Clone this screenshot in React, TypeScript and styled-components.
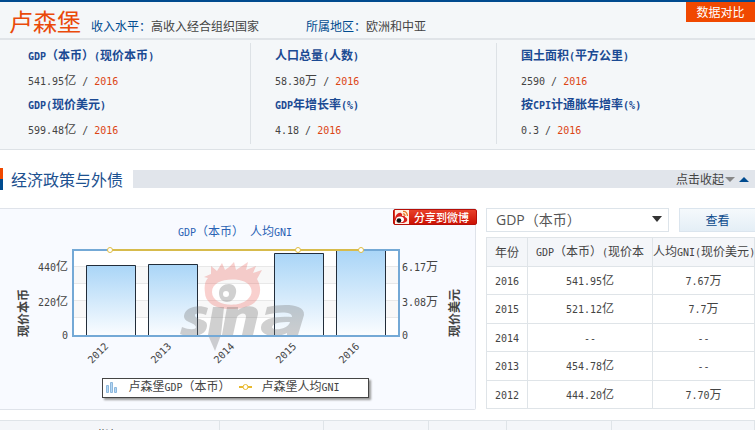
import React from 'react';
import styled, { createGlobalStyle } from 'styled-components';

const cjk = '"Noto Sans CJK SC", "Liberation Sans", sans-serif';
const mono = '"DejaVu Sans Mono", "Liberation Mono", monospace';

const GlobalStyle = createGlobalStyle`
  *, *::before, *::after { box-sizing: border-box; }
  html { scrollbar-width: none; }
  body {
    margin: 0;
    background: #fff;
    color: #444;
    font-family: ${cjk};
    font-size: 12px;
    line-height: 18px;
  }
  h1, h2, h3, p, dl, dt, dd { margin: 0; font-weight: normal; }
  button, select { font: inherit; margin: 0; }
`;

const Latin = styled.span`
  font-family: ${mono};
  font-size: 10px;
  white-space: pre;
`;

const split = (text: string) => text.split(/([\x20-\x7e]+)/).filter(Boolean);
const isLatin = (part: string) => /^[\x20-\x7e]/.test(part);

function Mixed({ children }: { children: string }) {
  return (
    <>
      {split(children).map((part, i) =>
        isLatin(part) ? <Latin key={i}>{part}</Latin> : <React.Fragment key={i}>{part}</React.Fragment>
      )}
    </>
  );
}

const Summary = styled.section`
  background: #f4f7f9;
  border-top: 2px solid #004b8f;
  border-bottom: 1px solid #dde2e6;
`;

const SummaryHead = styled.header`
  display: flex;
  align-items: flex-start;
  height: 38px;
  padding-left: 9px;
  border-bottom: 2px solid #e0e4e8;
`;

const Country = styled.h1`
  color: #ea4a0a;
  font-size: 24px;
  line-height: 38px;
`;

const Fact = styled.p<{ $gap: number }>`
  margin-left: ${(p) => p.$gap}px;
  padding-top: 15px;
  color: #444;
`;

const FactName = styled.span`
  color: #004b8f;
`;

const Compare = styled.button`
  width: 69px;
  height: 20px;
  margin-left: auto;
  padding: 0;
  border: 0;
  background: #f04800;
  color: #fff;
  line-height: 20px;
`;

const Stats = styled.div`
  display: grid;
  grid-template-columns: 251fr 246fr 258fr;
  padding: 3px 0 5px;
`;

const StatColumn = styled.dl`
  padding: 0 0 3px 28px;
  border-right: 1px solid #dde2e6;

  & + & { padding-left: 24px; }
  &:last-child { border-right: 0; }
`;

const StatName = styled.dt`
  height: 24px;
  color: #1b4a93;
  font-weight: bold;
  line-height: 24px;
  white-space: nowrap;
`;

const StatValue = styled.dd`
  height: 25px;
  line-height: 25px;
`;

const Year = styled.span`
  color: #dc4514;
`;

const SectionHead = styled.header`
  display: flex;
  align-items: center;
  margin: 17px 0 17px;
  height: 24px;
`;

const Marker = styled.span`
  width: 3px;
  height: 22px;
  background: linear-gradient(#f04800 50%, #004b8f 50%);
`;

const SectionTitle = styled.h2`
  margin: 0 10px 0 8px;
  color: #1d5190;
  font-size: 16px;
  line-height: 24px;
`;

const SectionBar = styled.div`
  display: flex;
  flex: 1;
  align-items: center;
  justify-content: flex-end;
  height: 18px;
  padding-right: 5px;
  background: #e1e5eb;
`;

const Collapse = styled.button`
  display: flex;
  align-items: center;
  padding: 0;
  border: 0;
  background: none;
  color: #444;
  line-height: 18px;
`;

const Content = styled.div`
  display: grid;
  grid-template-columns: minmax(0, 476fr) minmax(0, 269fr);
  gap: 10px;
`;

const ChartPanel = styled.section`
  position: relative;
  display: flex;
  flex-direction: column;
  align-items: center;
  padding-bottom: 11px;
  border: 1px solid #dfe3ea;
  border-left: 0;
  border-radius: 0 2px 2px 0;
  background: #f8faff;
`;

const ChartSvg = styled.svg`
  display: block;
  width: 100%;
  height: auto;
`;

const Share = styled.button`
  position: absolute;
  top: 0;
  right: -2px;
  display: flex;
  align-items: center;
  height: 16px;
  padding: 0 7px 0 1px;
  gap: 5px;
  border: 1px solid #b50f08;
  border-radius: 2px;
  background: linear-gradient(#e8402a, #cc1204);
  color: #fff;
  font-size: 11px;
  font-weight: 500;
  line-height: 14px;
`;

const Legend = styled.div`
  display: flex;
  align-items: center;
  height: 20px;
  margin-left: -4px;
  padding: 0 28px 2px 3px;
  border: 1px solid #444;
  background: #fff;
  box-shadow: 2px 2px 2px #999;
  white-space: nowrap;
`;

const LegendText = styled.span`
  margin: 0 8px 0 10px;
  &:last-child { margin-right: 0; }
`;

const Side = styled.section`
  display: flex;
  flex-direction: column;
  gap: 5px;
`;

const Query = styled.form`
  display: flex;
  gap: 10px;
`;

const SelectWrap = styled.label`
  position: relative;
  flex: 1;
`;

const Select = styled.select`
  display: block;
  width: 100%;
  height: 24px;
  padding: 0 24px 0 9px;
  border: 1px solid #dde4ea;
  border-radius: 0;
  background: #fff;
  color: #555;
  appearance: none;
  font-family: "Open Sans", ${cjk};
  font-size: 14px;
`;

const Caret = styled.svg`
  position: absolute;
  top: 8px;
  right: 7px;
  pointer-events: none;
`;

const View = styled.button`
  width: 76px;
  height: 24px;
  padding: 0;
  border: 1px solid #dbe5ee;
  border-right: 0;
  background: linear-gradient(#f5f9fc, #e4eef6);
  color: #0a4a8c;
`;

const DataTable = styled.table`
  width: 100%;
  border-collapse: collapse;
  table-layout: fixed;
`;

const cell = `
  padding: 0;
  border: 1px solid #dfe4e8;
  text-align: center;
  white-space: nowrap;
  overflow: hidden;
`;

const HeadCell = styled.th<{ $width?: number }>`
  ${cell}
  ${(p) => (p.$width ? `width: ${p.$width}px;` : '')}
  height: 29px;
  background: #f4f6f9;
  font-weight: normal;
`;

const Row = styled.tr`
  height: 28px;

  &:nth-child(even) { height: 29px; }
`;

const Cell = styled.td`
  ${cell}
`;

const NextTable = styled.table`
  width: 100%;
  margin-top: 10px;
  border-collapse: collapse;
  table-layout: fixed;
`;

const NextHead = styled(HeadCell)`
  border-left: 0;
`;

const columns = [
  [
    ['GDP（本币）(现价本币)', '541.95亿 / '],
    ['GDP(现价美元)', '599.48亿 / '],
  ],
  [
    ['人口总量(人数)', '58.30万 / '],
    ['GDP年增长率(%)', '4.18 / '],
  ],
  [
    ['国土面积(平方公里)', '2590 / '],
    ['按CPI计通胀年增率(%)', '0.3 / '],
  ],
];

const rows = [
  ['2016', '541.95亿', '7.67万'],
  ['2015', '521.12亿', '7.7万'],
  ['2014', '--', '--'],
  ['2013', '454.78亿', '--'],
  ['2012', '444.20亿', '7.70万'],
];

const bars = [
  { x: 86, top: 56 },
  { x: 148, top: 55 },
  { x: 274, top: 44 },
  { x: 336, top: 41 },
];

const years = [
  { label: '2012', x: 109 },
  { label: '2013', x: 172 },
  { label: '2014', x: 235 },
  { label: '2015', x: 297 },
  { label: '2016', x: 360 },
];

type LabelProps = {
  x: number;
  y: number;
  children: string;
  anchor?: 'start' | 'middle' | 'end';
  fill?: string;
  bold?: boolean;
  transform?: string;
};

function Label({ x, y, children, anchor = 'start', fill = '#444', bold, transform }: LabelProps) {
  return (
    <text x={x} y={y} textAnchor={anchor} fill={fill} fontSize={12} fontWeight={bold ? 700 : 400} transform={transform}>
      {split(children).map((part, i) => (
        <tspan key={i} fontFamily={isLatin(part) ? mono : cjk} fontSize={isLatin(part) ? 10 : 12}>
          {part}
        </tspan>
      ))}
    </text>
  );
}

function Watermark() {
  return (
    <g>
      <path
        fill="#e8443c"
        fillRule="evenodd"
        opacity={0.25}
        d="M205 84C204 77 205 72 208 69L204 68L211 65L211 57L217 62L222 54L225 61Q230 58 234 53L236 61L248 53L246 61L256 57L253 64L262 61L257 70C262 79 261 88 254 94C243 102 219 102 210 94C207 91 205 88 205 84ZM212 83C212 97 238 99 247 91C256 83 251 73 239 71C225 69 212 73 212 83Z"
      />
      <g fill="#777" opacity={0.34}>
        <path fillRule="evenodd" d="M219 84C219 78 224 75 229 75C234 75 237 79 236 84C235 90 231 93 227 93C222 93 219 89 219 84ZM223 85a3 3 0 1 0 6 0a3 3 0 1 0 -6 0Z" />
        <path d="M208 99L206 106C200 104 194 104 195 107C197 111 208 110 207 117C206 128 190 129 180 125L182 118C189 121 196 121 196 118C195 113 184 114 184 107C185 98 198 95 208 99Z" />
        <path d="M213 98H224L221 126L215 142L208 126Z" />
        <path d="M227 98H238V101C246 95 259 96 258 105L253 126H242L246 108C246 103 240 104 237 108L233 126H222Z" />
        <path fillRule="evenodd" d="M267 98C282 95 305 94 304 106L298 126H287V124C278 129 260 128 261 118C262 109 276 107 292 108C292 102 278 103 265 106ZM290 113C279 113 273 114 272 118C272 122 288 121 290 113Z" />
      </g>
    </g>
  );
}

function Chart() {
  return (
    <ChartSvg viewBox="0 0 475 169" role="img" aria-label="GDP（本币） 人均GNI">
      <defs>
        <linearGradient id="bar" x1="0" y1="0" x2="0" y2="1">
          <stop offset="0" stopColor="#a9d5f7" />
          <stop offset="1" stopColor="#fbfdff" />
        </linearGradient>
      </defs>
      <Label x={235} y={27} anchor="middle" fill="#2a62b4">GDP（本币） 人均GNI</Label>
      <rect x={73} y={41} width={326} height={86} fill="#fff" />
      {[57, 91].map((y) => (
        <path key={y} fill="#f8f8f8" stroke="#e8e8e8" d={`M73 ${y}.5H399V${y + 17}.5H73Z`} />
      ))}
      {bars.map((b) => (
        <React.Fragment key={b.x}>
          <path d={`M${b.x} ${b.top}h50V127h-50Z`} fill="url(#bar)" />
          <path d={`M${b.x}.5 127V${b.top}.5h49V127`} fill="none" stroke="#222d3a" />
        </React.Fragment>
      ))}
      <Watermark />
      <rect x={73} y={41} width={326} height={86} fill="none" stroke="#74a9d6" strokeWidth={2} />
      <path d="M110 41H361" stroke="#d7bb4c" strokeWidth={2} />
      {[110, 298, 361].map((x) => (
        <circle key={x} cx={x} cy={41} r={2.5} fill="#fff" stroke="#dfbd42" />
      ))}
      <Label x={68} y={62} anchor="end">440亿</Label>
      <Label x={68} y={97} anchor="end">220亿</Label>
      <Label x={68} y={130} anchor="end">0</Label>
      <Label x={402} y={62}>6.17万</Label>
      <Label x={402} y={97}>3.08万</Label>
      <Label x={402} y={130}>0</Label>
      <Label x={0} y={0} bold transform="translate(28 128) rotate(-90)">现价本币</Label>
      <Label x={0} y={0} bold transform="translate(459 128) rotate(-90)">现价美元</Label>
      {years.map((y) => (
        <Label key={y.label} x={0} y={0} anchor="end" transform={`translate(${y.x} 138) rotate(-45)`}>{y.label}</Label>
      ))}
    </ChartSvg>
  );
}

function WeiboIcon() {
  return (
    <svg width="14" height="14" viewBox="0 0 14 14" aria-hidden="true">
      <rect width="14" height="14" fill="#fff0e4" />
      <path fill="#d8201c" d="M0 9C0 6 3 2 6 3Q8 4 7 6Q10 5 10 7Q13 8 12 11C10 14 1 14 0 9Z" />
      <ellipse cx="5" cy="9.500" rx="4" ry="3" fill="#fff" />
      <circle cx="4" cy="10.500" r="2.300" fill="#111" />
      <path fill="none" stroke="#e87822" strokeWidth="1.300" d="M8 1.500Q12 1 12.500 6M8 4Q10 3.500 10 6" />
    </svg>
  );
}

export default function App() {
  return (
    <>
      <GlobalStyle />
      <main>
        <Summary>
          <SummaryHead>
            <Country>卢森堡</Country>
            <Fact $gap={10}><FactName>收入水平：</FactName>高收入经合组织国家</Fact>
            <Fact $gap={47}><FactName>所属地区：</FactName>欧洲和中亚</Fact>
            <Compare type="button">数据对比</Compare>
          </SummaryHead>
          <Stats>
            {columns.map((items, i) => (
              <StatColumn key={i}>
                {items.map(([name, value]) => (
                  <React.Fragment key={name}>
                    <StatName><Mixed>{name}</Mixed></StatName>
                    <StatValue><Mixed>{value}</Mixed><Year><Mixed>2016</Mixed></Year></StatValue>
                  </React.Fragment>
                ))}
              </StatColumn>
            ))}
          </Stats>
        </Summary>
        <SectionHead>
          <Marker />
          <SectionTitle>经济政策与外债</SectionTitle>
          <SectionBar>
            <Collapse type="button">
              点击收起
              <svg width="26" height="8" viewBox="0 0 26 8" aria-hidden="true">
                <path fill="#888" d="M1 2H11L6 7Z" />
                <path fill="#004b8f" d="M15 7H25L20 2Z" />
              </svg>
            </Collapse>
          </SectionBar>
        </SectionHead>
        <Content>
          <ChartPanel>
            <Chart />
            <Legend>
              <svg width="12" height="12" viewBox="0 0 12 12" aria-hidden="true">
                <path fill="#b5d8f5" stroke="#8fb8dc" d="M.5 4.500h2v7h-2ZM4.500 1.500h2v10h-2ZM8.500 6.500h2v5h-2Z" />
              </svg>
              <LegendText><Mixed>卢森堡GDP（本币）</Mixed></LegendText>
              <svg width="13" height="8" viewBox="0 0 13 8" aria-hidden="true">
                <path stroke="#e8b92e" strokeWidth="2" d="M0 4H13" />
                <circle cx="6.500" cy="4" r="2.500" fill="#fff" stroke="#e8b92e" />
              </svg>
              <LegendText><Mixed>卢森堡人均GNI</Mixed></LegendText>
            </Legend>
            <Share type="button"><WeiboIcon />分享到微博</Share>
          </ChartPanel>
          <Side>
            <Query onSubmit={(e) => e.preventDefault()}>
              <SelectWrap>
                <Select aria-label="指标" defaultValue="gdp">
                  <option value="gdp">GDP（本币）</option>
                  <option value="gni">人均GNI</option>
                </Select>
                <Caret width="10" height="6" viewBox="0 0 10 6" aria-hidden="true">
                  <path fill="#333" d="M0 0H10L5 6Z" />
                </Caret>
              </SelectWrap>
              <View type="submit">查看</View>
            </Query>
            <DataTable>
              <thead>
                <tr>
                  <HeadCell $width={41}>年份</HeadCell>
                  <HeadCell $width={125}><Mixed>GDP（本币）(现价本</Mixed></HeadCell>
                  <HeadCell><Mixed>人均GNI(现价美元)</Mixed></HeadCell>
                </tr>
              </thead>
              <tbody>
                {rows.map((row) => (
                  <Row key={row[0]}>
                    {row.map((value, i) => (
                      <Cell key={i}><Mixed>{value}</Mixed></Cell>
                    ))}
                  </Row>
                ))}
              </tbody>
            </DataTable>
          </Side>
        </Content>
        <NextTable>
          <thead>
            <tr>
              <NextHead $width={219}>指标</NextHead>
              <NextHead $width={104} />
              <NextHead $width={105} />
              <NextHead $width={78} />
              <NextHead $width={105} />
              <NextHead />
            </tr>
          </thead>
        </NextTable>
      </main>
    </>
  );
}
